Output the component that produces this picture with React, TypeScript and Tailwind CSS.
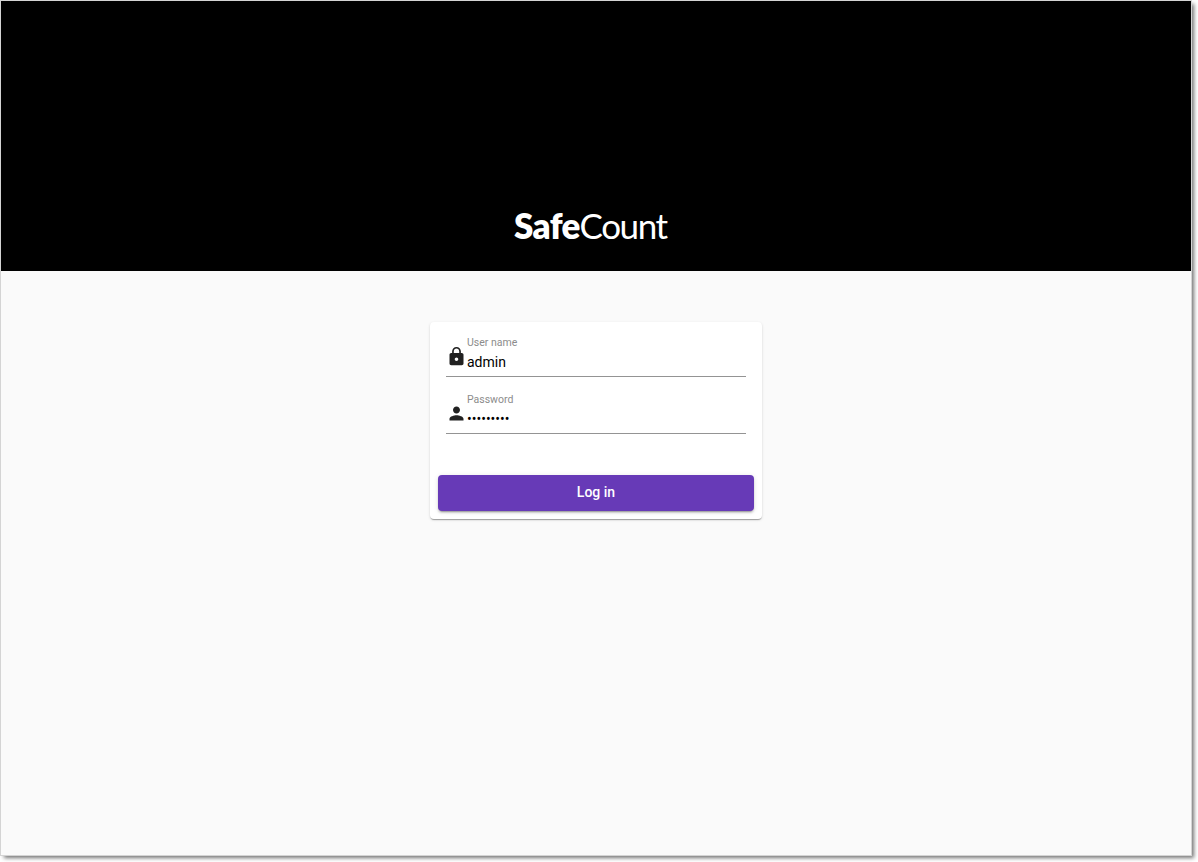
import { useState } from 'react'
import type { ReactNode } from 'react'
import { MdLock, MdPerson } from 'react-icons/md'

type FieldProps = {
  label: string
  type: string
  value: string
  icon: ReactNode
  onChange: (value: string) => void
}

const Field = ({ label, type, value, icon, onChange }: FieldProps) => {
  return (
    <label className="flex h-[57px] flex-col">
      <span className="flex h-[42px] items-end border-b border-[#949494]">
        <span className="mb-[9px] flex w-[21px] shrink-0 text-[#212121]">
          {icon}
        </span>
        <span className="flex h-full min-w-0 flex-1 flex-col">
          <span className="mt-px h-[13px] text-[10.5px] leading-[13px] text-[#8c8c8c]">
            {label}
          </span>
          <input
            type={type}
            value={value}
            onChange={(e) => onChange(e.target.value)}
            className="mt-[5px] h-4 w-full bg-transparent text-sm leading-4 text-black outline-none"
          />
        </span>
      </span>
    </label>
  )
}

const Logo = () => {
  return (
    <h1 className="flex h-[44px] font-['Lato',sans-serif] text-[35px] leading-[44px] whitespace-nowrap text-white">
      <span className="w-[65.5px] font-extrabold tracking-[-0.6px]">Safe</span>
      <span className="tracking-[-1.4px]">Count</span>
    </h1>
  )
}

const App = () => {
  const [user, setUser] = useState('admin')
  const [password, setPassword] = useState('safecount')

  return (
    <div className="h-[862px] w-[1198px] overflow-hidden bg-white font-['Roboto',sans-serif]">
      <main className="flex h-[856px] w-[1192px] flex-col border border-[#d4d4d4] bg-[#fafafa] shadow-[3px_3px_4px_-1px_rgba(0,0,0,0.55)]">
        <header className="flex h-[270px] shrink-0 items-end bg-black pb-6 pl-[513px]">
          <Logo />
        </header>
        <form
          onSubmit={(e) => e.preventDefault()}
          className="mx-auto mt-[51px] flex h-[197px] w-[332px] flex-col rounded-[4px] bg-white p-2 shadow-[0_2px_1px_-1px_rgba(0,0,0,0.2),0_1px_1px_0_rgba(0,0,0,0.14),0_1px_3px_0_rgba(0,0,0,0.12)]"
        >
          <div className="flex-1 px-2 pt-[5px]">
            <Field
              label="User name"
              type="text"
              value={user}
              icon={<MdLock size={21} />}
              onChange={setUser}
            />
            <Field
              label="Password"
              type="password"
              value={password}
              icon={<MdPerson size={21} />}
              onChange={setPassword}
            />
          </div>
          <button
            type="submit"
            className="h-9 w-full shrink-0 rounded-[4px] bg-[#673ab7] pb-0.5 text-sm font-medium text-white shadow-[0_3px_1px_-2px_rgba(0,0,0,0.2),0_2px_2px_0_rgba(0,0,0,0.14),0_1px_5px_0_rgba(0,0,0,0.12)]"
          >
            Log in
          </button>
        </form>
      </main>
    </div>
  )
}
export default App
